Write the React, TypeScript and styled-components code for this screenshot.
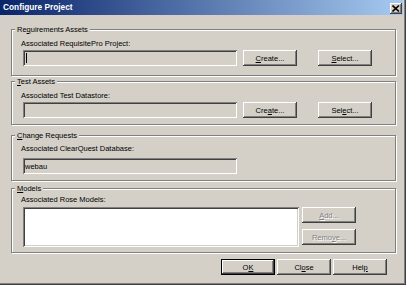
import styled, { createGlobalStyle } from 'styled-components';

const GlobalStyle = createGlobalStyle`
  html, body {
    margin: 0;
    padding: 0;
    background: #d4d0c8;
  }
  body {
    font-family: "Liberation Sans", Arial, sans-serif;
  }
`;

const Window = styled.div`
    width: 406px;
    height: 285px;
    box-sizing: border-box;
    background: #d4d0c8;
    box-shadow: inset -1px -1px #404040, inset -2px -2px #808080;
    display: flex;
    flex-direction: column;
    overflow: hidden;
`

const TitleBar = styled.div`
    height: 15px;
    margin-right: 3px;
    padding: 0 1px 0 3px;
    display: flex;
    align-items: flex-start;
    justify-content: space-between;
    background: linear-gradient(to right, #0a246a, #a6caf0);
`

const Title = styled.span`
    color: #fff;
    font-weight: bold;
    font-size: 8.3px;
    line-height: 15px;
    white-space: nowrap;
`

const CloseButton = styled.div`
    width: 12px;
    height: 11px;
    margin-top: 3px;
    box-sizing: border-box;
    background: #d4d0c8;
    box-shadow: inset -1px -1px #404040, inset 1px 1px #fff, inset -2px -2px #808080;
    display: flex;
    align-items: center;
    justify-content: center;
`

const Body = styled.div`
    flex: 1;
    padding: 10px 10px 0 11px;
    display: flex;
    flex-direction: column;
`

const Group = styled.fieldset<{ $mt: number, $pb: number }>`
    margin: ${({ $mt }) => $mt}px 0 0 0;
    padding: 0 0 ${({ $pb }) => $pb}px 0;
    border: 1px solid #808080;
    box-shadow: inset 1px 1px #fff, 1px 1px #fff;
    min-width: 0;
`

const Legend = styled.legend`
    margin-left: 3px;
    padding: 0 2px;
    font-size: 7.5px;
    line-height: 9px;
    color: #000;
    background: #d4d0c8;
`

const FieldLabel = styled.div<{ $mt: number, $mb: number }>`
    margin: ${({ $mt }) => $mt}px 0 ${({ $mb }) => $mb}px 9px;
    font-size: 7.5px;
    line-height: 9px;
    color: #000;
    white-space: nowrap;
`

const Row = styled.div`
    display: flex;
    align-items: flex-start;
    margin-left: 11px;
`

const Field = styled.div`
    width: 214px;
    height: 16px;
    box-sizing: border-box;
    padding-left: 2px;
    background: #d4d0c8;
    box-shadow: inset 1px 1px #808080, inset -1px -1px #fff, inset 2px 2px #404040, inset -2px -2px #d4d0c8;
    display: flex;
    align-items: center;
    font-size: 7.5px;
    color: #000;
`

const Caret = styled.span`
    width: 1px;
    height: 10px;
    margin-left: 1px;
    background: #000;
`

const ModelList = styled.div`
    width: 276px;
    height: 40px;
    box-sizing: border-box;
    background: #fff;
    box-shadow: inset 1px 1px #808080, inset -1px -1px #fff, inset 2px 2px #404040, inset -2px -2px #d4d0c8;
`

const SideButtons = styled.div`
    display: flex;
    flex-direction: column;
    gap: 6px;
    margin-left: 3px;
`

const Button = styled.div<{ $ml?: number, $disabled?: boolean, $default?: boolean }>`
    width: 54px;
    height: 16px;
    box-sizing: border-box;
    margin-left: ${({ $ml }) => $ml || 0}px;
    background: #d4d0c8;
    border: ${({ $default }) => $default ? '1px solid #000' : 'none'};
    box-shadow: inset -1px -1px #404040, inset 1px 1px #fff, inset -2px -2px #808080, inset 2px 2px #d4d0c8;
    display: flex;
    align-items: center;
    justify-content: center;
    font-size: 7.5px;
    color: ${({ $disabled }) => $disabled ? '#808080' : '#000'};
    text-shadow: ${({ $disabled }) => $disabled ? '1px 1px #fff' : 'none'};
    white-space: nowrap;
`

const Footer = styled.div`
    display: flex;
    justify-content: flex-end;
    gap: 2px;
    margin-top: 6px;
    padding-right: 9px;
`

const Key = styled.span`
    text-decoration: underline;
`

// label with one underlined access key
const Mnemonic = ({ text, at }: { text: string, at: number }) => (
    <>
        {text.slice(0, at)}<Key>{text[at]}</Key>{text.slice(at + 1)}
    </>
);

export default function App() {
    return (
        <>
            <GlobalStyle />
            <Window>
                <TitleBar>
                    <Title>Configure Project</Title>
                    <CloseButton>
                        <svg width="8" height="7" viewBox="0 0 8 7">
                            <path d="M0.5 0.5 L7 6.5 M7 0.5 L0.5 6.5" stroke="#000" strokeWidth="1.6" />
                        </svg>
                    </CloseButton>
                </TitleBar>
                <Body>
                    <Group $mt={0} $pb={9}>
                        <Legend><Mnemonic text="Requirements Assets" at={2} /></Legend>
                        <FieldLabel $mt={5} $mb={2}>Associated RequisitePro Project:</FieldLabel>
                        <Row>
                            <Field><Caret /></Field>
                            <Button $ml={6}><Mnemonic text="Create..." at={0} /></Button>
                            <Button $ml={21}><Mnemonic text="Select..." at={0} /></Button>
                        </Row>
                    </Group>
                    <Group $mt={1} $pb={6}>
                        <Legend><Mnemonic text="Test Assets" at={0} /></Legend>
                        <FieldLabel $mt={5} $mb={2}>Associated Test Datastore:</FieldLabel>
                        <Row>
                            <Field />
                            <Button $ml={6}><Mnemonic text="Create..." at={3} /></Button>
                            <Button $ml={21}><Mnemonic text="Select..." at={3} /></Button>
                        </Row>
                    </Group>
                    <Group $mt={6} $pb={6}>
                        <Legend><Mnemonic text="Change Requests" at={0} /></Legend>
                        <FieldLabel $mt={4} $mb={5}>Associated ClearQuest Database:</FieldLabel>
                        <Row>
                            <Field>webau</Field>
                        </Row>
                    </Group>
                    <Group $mt={3} $pb={5}>
                        <Legend><Mnemonic text="Models" at={0} /></Legend>
                        <FieldLabel $mt={2} $mb={3}>Associated Rose Models:</FieldLabel>
                        <Row>
                            <ModelList />
                            <SideButtons>
                                <Button $disabled><Mnemonic text="Add..." at={0} /></Button>
                                <Button $disabled><Mnemonic text="Remove..." at={4} /></Button>
                            </SideButtons>
                        </Row>
                    </Group>
                    <Footer>
                        <Button $default>O<Key>K</Key></Button>
                        <Button><Mnemonic text="Close" at={2} /></Button>
                        <Button><Mnemonic text="Help" at={3} /></Button>
                    </Footer>
                </Body>
            </Window>
        </>
    );
}
